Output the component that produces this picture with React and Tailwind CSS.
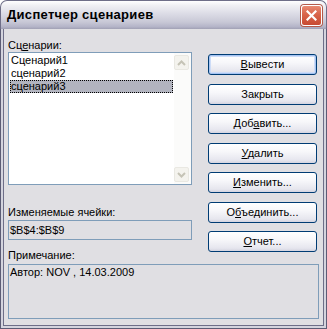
const FONT = { fontFamily: '"Liberation Sans", Arial, sans-serif' };

function XpButton({ children, isDefault, className = '' }) {
  return (
    <button
      type="button"
      className={`h-[21px] w-full rounded-[3px] border border-[#003c74] bg-[linear-gradient(to_bottom,#ffffff_0%,#f7f7fa_40%,#e6e6ee_85%,#d4d4e0_100%)] text-[11px] leading-[13px] text-black ${
        isDefault ? 'shadow-[inset_0_0_0_1px_#a6c4f2,inset_0_0_0_2px_#cddcf7]' : ''
      } ${className}`}
    >
      {children}
    </button>
  );
}

function Chevron({ up }) {
  return (
    <svg width="9" height="6" viewBox="0 0 9 6">
      <path
        d={up ? 'M1 5 L4.5 1.5 L8 5' : 'M1 1 L4.5 4.5 L8 1'}
        fill="none"
        stroke="#c5c3b6"
        strokeWidth="2"
      />
    </svg>
  );
}

function ListBox() {
  const items = ['Сценарий1', 'сценарий2', 'сценарий3'];
  return (
    <div className="flex h-[133px] border border-[#7f9db9] bg-white">
      <div className="flex-1 p-px">
        {items.map((it, i) => (
          <div
            key={it}
            className={`h-[13px] pl-[1px] text-[11px] leading-[13px] ${
              i === 2 ? 'bg-[#b2b4bf] outline-1 outline-dotted outline-black -outline-offset-1' : ''
            }`}
          >
            {it}
          </div>
        ))}
      </div>
      <div className="flex w-[17px] flex-col justify-between bg-[#fbfbfa] py-[2px] pr-px">
        <div className="flex h-[15px] w-[15px] items-center justify-center rounded-[2px] border border-[#e9e8e2] bg-[#f4f3ee]">
          <Chevron up />
        </div>
        <div className="flex h-[15px] w-[15px] items-center justify-center rounded-[2px] border border-[#e9e8e2] bg-[#f4f3ee]">
          <Chevron />
        </div>
      </div>
    </div>
  );
}

export default function App() {
  return (
    <div className="flex h-[329px] w-[327px] flex-col bg-white text-black" style={FONT}>
      {/* title bar */}
      <div className="flex h-[29px] items-center justify-between rounded-t-[7px] border-x border-t border-[#6e6e88] bg-[linear-gradient(to_bottom,#ffffff_0%,#f0f0f4_15%,#dcdce6_45%,#c8c8d6_75%,#b4b4c8_92%,#a0a0b4_100%)] pl-[6px] pr-[4px]">
        <span className="text-[13px] font-bold tracking-[0.3px] text-black">Диспетчер сценариев</span>
        <div className="flex h-[21px] w-[21px] items-center justify-center rounded-[3px] border border-white bg-[linear-gradient(to_bottom,#e88a72_0%,#d8644a_45%,#c84a32_100%)] shadow-[0_0_0_1px_#b45a4a]">
          <svg width="11" height="11" viewBox="0 0 11 11">
            <path d="M1.5 1.5 L9.5 9.5 M9.5 1.5 L1.5 9.5" stroke="white" strokeWidth="2.2" strokeLinecap="square" />
          </svg>
        </div>
      </div>

      {/* frame */}
      <div className="flex-1 border-x border-b border-[#5c5c75]">
        <div className="h-full border-x-2 border-b-2 border-[#d4d4de]">
          <div className="h-full border-x border-b border-[#6e6e88] bg-[#e0dfe3] px-[4px] pt-[9px]">
            <div className="flex gap-[16px]">
              <div className="w-[184px]">
                <div className="h-[14px] text-[11px] leading-[14px]">
                  Сц<span className="underline">е</span>нарии:
                </div>
                <ListBox />
                <div className="mt-[20px] h-[14px] text-[11px] leading-[14px]">Изменяемые ячейки:</div>
                <div className="mt-px h-[20px] border border-[#7f9db9] pl-px text-[11px] leading-[18px]">
                  $B$4:$B$9
                </div>
                <div className="mt-[8px] h-[14px] text-[11px] leading-[14px]">Примечание:</div>
              </div>
              <div className="flex w-[109px] flex-col pt-[16px]">
                <XpButton isDefault>
                  <span className="underline">В</span>ывести
                </XpButton>
                <XpButton className="mt-[9px]">Закрыть</XpButton>
                <XpButton className="mt-[8px]">
                  Доб<span className="underline">а</span>вить...
                </XpButton>
                <XpButton className="mt-[9px]">
                  <span className="underline">У</span>далить
                </XpButton>
                <XpButton className="mt-[8px]">
                  <span className="underline">И</span>зменить...
                </XpButton>
                <XpButton className="mt-[9px]">
                  О<span className="underline">б</span>ъединить...
                </XpButton>
                <XpButton className="mt-[8px]">
                  <span className="underline">О</span>тчет...
                </XpButton>
              </div>
            </div>
            <div className="mt-[2px] h-[55px] border border-[#7f9db9] pl-px pt-px text-[11px] leading-[13px]">
              Автор: NOV , 14.03.2009
            </div>
          </div>
        </div>
      </div>
    </div>
  );
}
